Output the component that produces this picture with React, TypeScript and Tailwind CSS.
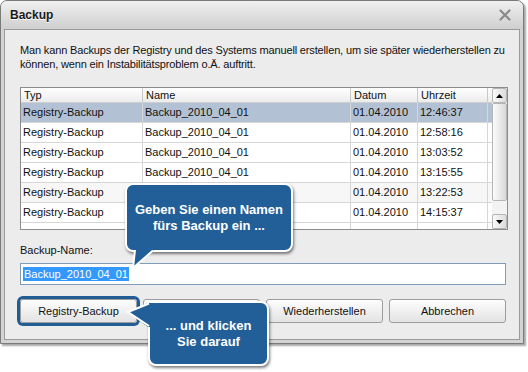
import React from "react";

const rows = [
  { name: "Backup_2010_04_01", date: "01.04.2010", time: "12:46:37" },
  { name: "Backup_2010_04_01", date: "01.04.2010", time: "12:58:16" },
  { name: "Backup_2010_04_01", date: "01.04.2010", time: "13:03:52" },
  { name: "Backup_2010_04_01", date: "01.04.2010", time: "13:15:55" },
  { name: "Backup_2010_04_01", date: "01.04.2010", time: "13:22:53" },
  { name: "Backup_2010_04_01", date: "01.04.2010", time: "14:15:37" },
];

const cols = ["w-[122px]", "w-[208px]", "w-[67px]", "w-[70px]"];

function Btn({ label, active }: { label: string; active?: boolean }) {
  return (
    <div
      className={`w-[117px] h-[24px] flex items-center justify-center rounded-[3px] border border-[#9d9d9d] bg-gradient-to-b from-[#fdfdfd] to-[#e3e3e3] text-[11px] text-[#111] ${
        active ? "ring-3 ring-[#215c95]" : ""
      }`}
    >
      {label}
    </div>
  );
}

export default function App() {
  return (
    <div
      className="relative w-[528px] h-[372px] bg-white overflow-hidden text-[#111]"
      style={{ fontFamily: '"Liberation Sans", Arial, sans-serif' }}
    >
      {/* Dialog window */}
      <div className="w-[524px] h-[344px] flex flex-col rounded-t-[7px] border border-[#7a7a7a] bg-[#d3d3d3] shadow-[2px_2px_2px_rgba(0,0,0,0.35)]">
        <div className="h-[28px] shrink-0 flex items-center justify-between pl-[9px] pr-[12px] rounded-t-[6px] bg-gradient-to-b from-[#f0f0f0] to-[#cfcfcf]">
          <span className="text-[12px] font-bold text-[#1a1a1a] [text-shadow:0_1px_0_#fff]">Backup</span>
          <svg width="12" height="12" viewBox="0 0 12 12">
            <path d="M1.5 1.5 L10.5 10.5 M10.5 1.5 L1.5 10.5" stroke="#8a8a8a" strokeWidth="2.2" strokeLinecap="round" />
          </svg>
        </div>

        <div className="flex-1 mx-[3px] mb-[3px] border border-[#9a9a9a] bg-[#ececec] pt-[13px] pl-[15px] flex flex-col">
          <p className="text-[11px] leading-[14px] tracking-[-0.15px] whitespace-nowrap">
            Man kann Backups der Registry und des Systems manuell erstellen, um sie später wiederherstellen zu
            <br />
            können, wenn ein Instabilitätsproblem o.Ä. auftritt.
          </p>

          {/* Table */}
          <div className="mt-[16px] w-[488px] h-[143px] flex border border-[#8c8c8c] bg-white">
            <div className="flex-1 flex flex-col overflow-hidden">
              <div className="h-[15px] shrink-0 flex border-b border-[#cfcfcf] bg-gradient-to-b from-[#ffffff] to-[#ececec] text-[11px] leading-[14px]">
                {["Typ", "Name", "Datum", "Uhrzeit"].map((h, i) => (
                  <div key={h} className={`${cols[i]} shrink-0 pl-[3px] border-r border-[#c9c9c9]`}>
                    {h}
                  </div>
                ))}
                <div className="w-[4px] shrink-0" />
              </div>
              {[...rows, { name: "", date: "", time: "" }].map((r, idx) => (
                <div
                  key={idx}
                  className={`h-[20px] shrink-0 flex items-center border-b border-[#d6d6d6] text-[11px] ${
                    idx === 0 ? "bg-[#b3c1d4]" : idx === 4 ? "bg-[#f7f7f7]" : "bg-white"
                  }`}
                >
                  <div className={`${cols[0]} h-full shrink-0 flex items-center pl-[2px] border-r border-[#d6d6d6]`}>
                    {r.name ? "Registry-Backup" : ""}
                  </div>
                  <div className={`${cols[1]} h-full shrink-0 flex items-center pl-[2px] border-r border-[#d6d6d6]`}>{r.name}</div>
                  <div className={`${cols[2]} h-full shrink-0 flex items-center pl-[2px] border-r border-[#d6d6d6]`}>{r.date}</div>
                  <div className={`${cols[3]} h-full shrink-0 flex items-center pl-[2px] border-r border-[#d6d6d6]`}>{r.time}</div>
                </div>
              ))}
            </div>

            {/* Scrollbar */}
            <div className="w-[15px] shrink-0 flex flex-col bg-[#f3f3f3]">
              <div className="h-[15px] flex items-center justify-center rounded-[2px] border border-[#b5b5b5] bg-gradient-to-r from-[#fafafa] to-[#dcdcdc]">
                <svg width="7" height="4" viewBox="0 0 7 4"><path d="M0 4 L3.5 0 L7 4 Z" fill="#000" /></svg>
              </div>
              <div className="h-[98px] rounded-[2px] border border-[#b5b5b5] bg-gradient-to-r from-[#fbfbfb] to-[#d9d9d9]" />
              <div className="flex-1" />
              <div className="h-[15px] flex items-center justify-center rounded-[2px] border border-[#b5b5b5] bg-gradient-to-r from-[#fafafa] to-[#dcdcdc]">
                <svg width="7" height="4" viewBox="0 0 7 4"><path d="M0 0 L3.5 4 L7 0 Z" fill="#000" /></svg>
              </div>
            </div>
          </div>

          <div className="mt-[13px] text-[11px] leading-[14px]">Backup-Name:</div>
          <div className="mt-[6px] w-[486px] h-[22px] flex items-center pl-[2px] border border-[#7f9db9] bg-white text-[11px]">
            <span className="bg-[#3399ff] text-white leading-[14px] px-[1px]">Backup_2010_04_01</span>
          </div>

          <div className="mt-[14px] flex gap-[6px]">
            <Btn label="Registry-Backup" active />
            <Btn label="Löschen" />
            <Btn label="Wiederherstellen" />
            <Btn label="Abbrechen" />
          </div>
        </div>
      </div>

      {/* Callout 1 */}
      <div className="absolute left-[125px] top-[183px] w-[168px] h-[69px] flex flex-col items-center justify-center rounded-[8px] border-2 border-white bg-[#225f98] shadow-[1px_2px_3px_rgba(0,0,0,0.5)] text-white text-[13px] font-bold leading-[16px] text-center">
        <span>Geben Sie einen Namen</span>
        <span>fürs Backup ein ...</span>
      </div>
      <svg className="absolute left-[125px] top-[245px]" width="40" height="28" viewBox="0 0 40 28">
        <path d="M10 0 L29 0 L29 5 L8 23 L10 5 Z" fill="#225f98" />
        <path d="M10 5 L8 23 L28 5.5" fill="none" stroke="#fff" strokeWidth="2" strokeLinejoin="miter" />
      </svg>

      {/* Callout 2 */}
      <div className="absolute left-[148px] top-[301px] w-[121px] h-[65px] flex flex-col items-center justify-center rounded-[8px] border-2 border-white bg-[#225f98] shadow-[1px_2px_3px_rgba(0,0,0,0.5)] text-white text-[13px] font-bold leading-[16px] text-center">
        <span>... und klicken</span>
        <span>Sie darauf</span>
      </div>
      <svg className="absolute left-[125px] top-[300px]" width="30" height="32" viewBox="0 0 30 32">
        <path d="M23 3 L30 3 L30 27 L23 27 L3 12 Z" fill="#225f98" />
        <path d="M24 3.5 L3 12 L24 26" fill="none" stroke="#fff" strokeWidth="2" />
      </svg>
    </div>
  );
}
